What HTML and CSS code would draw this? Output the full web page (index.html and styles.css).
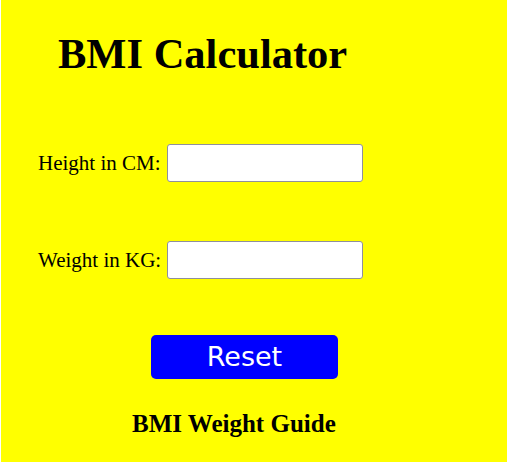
FILE: index.html
```html
<!DOCTYPE html>
<html>
<head>
<meta charset="utf-8">
<title>BMI Calculator</title>
<link rel="stylesheet" href="styles.css">
</head>
<body>
<div class="page">
  <h1 class="title">BMI Calculator</h1>
  <div class="row row-first">
    <label class="label" for="h">Height in CM:</label>
    <input class="field" id="h" type="text">
  </div>
  <div class="row row-second">
    <label class="label" for="w">Weight in KG:</label>
    <input class="field" id="w" type="text">
  </div>
  <button class="reset" type="button">Reset</button>
  <h2 class="guide">BMI Weight Guide</h2>
</div>
</body>
</html>
```
FILE: styles.css
```css
html, body {
  margin: 0;
  padding: 0;
  background: #ffffff;
}
body {
  padding-left: 1px;
}
.page {
  background: #ffff00;
  height: 462px;
  overflow: hidden;
  font-family: "Liberation Serif", "Times New Roman", serif;
  color: #000;
  display: flex;
  flex-direction: column;
  align-items: flex-start;
}
.title {
  margin: 30px 0 0 57px;
  font-size: 42.5px;
  font-weight: bold;
  line-height: 48px;
}
.row {
  display: flex;
  align-items: center;
  gap: 6px;
  margin-left: 37px;
  height: 38px;
}
.row-first {
  margin-top: 66px;
}
.row-second {
  margin-top: 59px;
}
.label {
  font-size: 21px;
  line-height: 23px;
  padding-top: 1px;
}
.field {
  box-sizing: border-box;
  width: 196px;
  height: 38px;
  margin: 0;
  border: 1px solid #8f8f9d;
  border-radius: 3px;
  background: #fff;
  padding: 0 8px;
  font-family: "Liberation Sans", Arial, sans-serif;
  font-size: 16px;
}
.reset {
  margin: 56px 0 0 150px;
  width: 187px;
  height: 44px;
  border: none;
  border-radius: 5px;
  background: #0000ff;
  color: #ffffff;
  font-family: "DejaVu Sans", Verdana, sans-serif;
  font-size: 27px;
  padding: 0;
  line-height: 44px;
}
.guide {
  margin: 31px 0 0 131px;
  font-size: 25px;
  font-weight: bold;
  line-height: 28px;
}
```
